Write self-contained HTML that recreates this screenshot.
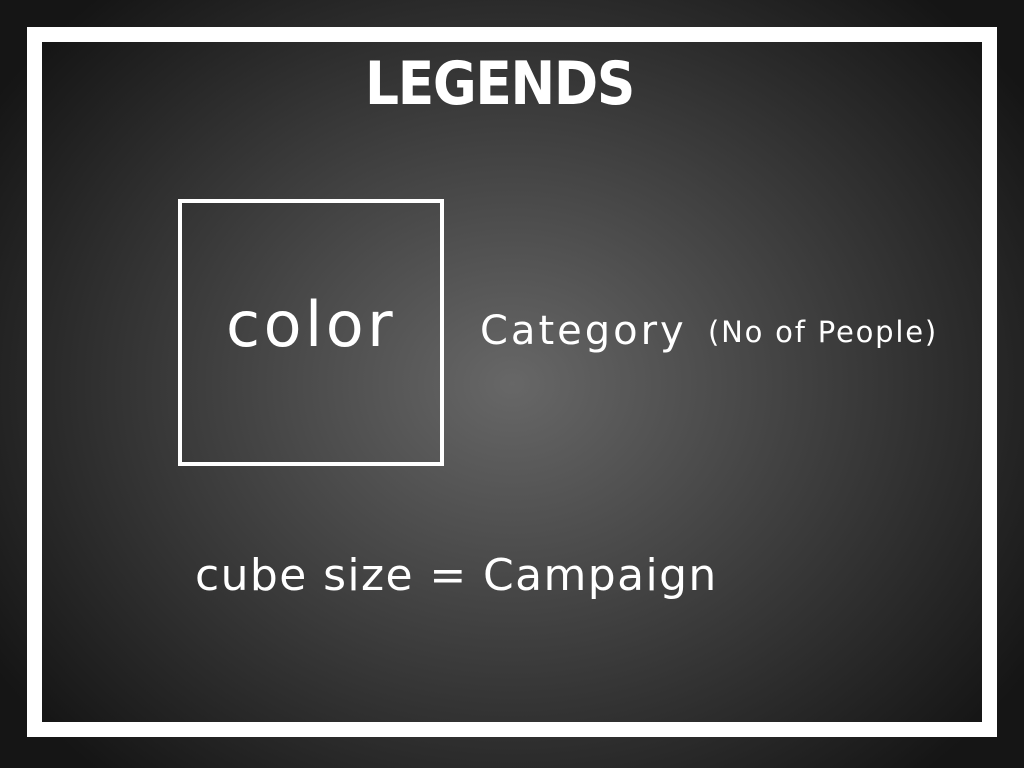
<!DOCTYPE html>
<html><head><style>
html,body{margin:0;padding:0}
body{width:1024px;height:768px;overflow:hidden;position:relative;
background:radial-gradient(ellipse 620px 520px at 512px 384px,#676767 0%,#3a3a3a 55%,#151515 100%);
font-family:"DejaVu Sans","Liberation Sans",sans-serif;color:#fff}
.frame{position:absolute;left:27px;top:27px;width:940px;height:680px;border:15px solid #fff}
.box{position:absolute;left:178px;top:199px;width:258px;height:259px;border:4px solid #fff}
.t{position:absolute;white-space:nowrap;line-height:1}
</style></head><body>
<div class="frame"></div>
<div class="box"></div>
<div class="t" style="left:365px;top:54px;font-size:60px;font-weight:bold;letter-spacing:-1.5px;transform:scaleX(0.89);transform-origin:0 0">LEGENDS</div>
<div class="t" style="left:226px;top:294px;font-size:62px;letter-spacing:3.5px">color</div>
<div class="t" style="left:480px;top:311px;font-size:40px;letter-spacing:3px">Category</div>
<div class="t" style="left:708px;top:318px;font-size:29px;letter-spacing:1.8px">(No of People)</div>
<div class="t" style="left:195px;top:554px;font-size:44px;letter-spacing:1.4px">cube size = Campaign</div>
</body></html>
